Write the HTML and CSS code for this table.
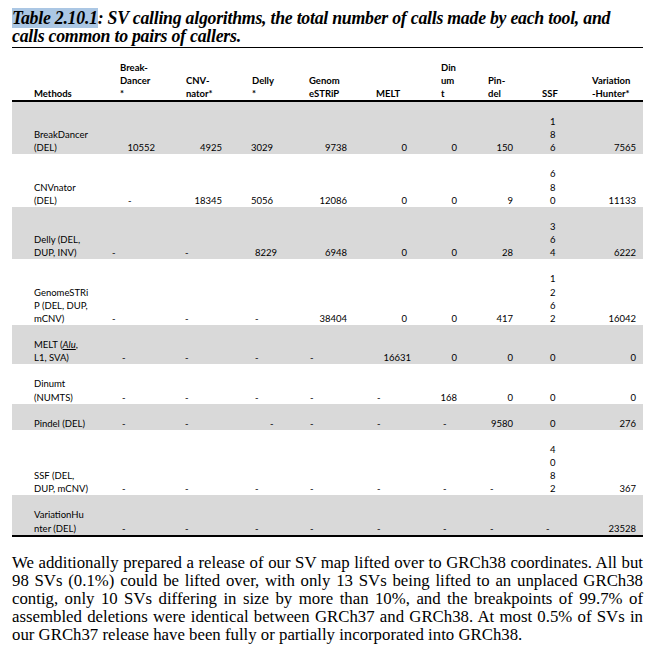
FILE: index.html
```html
<!DOCTYPE html>
<html>
<head>
<meta charset="utf-8">
<link rel="stylesheet" href="styles.css">
</head>
<body>
<div class="page">
  <h1 class="caption"><span class="label">Table 2.10.1</span>: SV calling algorithms, the total number of calls made by each tool, and<br>calls common to pairs of callers.</h1>
  <table class="sv">
    <colgroup>
      <col class="c0"><col class="c1"><col class="c2"><col class="c3"><col class="c4"><col class="c5"><col class="c6"><col class="c7"><col class="c8"><col class="c9">
    </colgroup>
    <thead>
      <tr>
        <th class="m">Methods</th>
        <th>Break-<br>Dancer<br>*</th>
        <th>CNV-<br>nator*</th>
        <th>Delly<br>*</th>
        <th>Genom<br>eSTRiP</th>
        <th>MELT</th>
        <th>Din<br>um<br>t</th>
        <th>Pin-<br>del</th>
        <th>SSF</th>
        <th>Variation<br>-Hunter*</th>
      </tr>
    </thead>
    <tbody>
      <tr class="g">
        <td class="m">BreakDancer<br>(DEL)</td>
        <td class="n">10552</td><td class="n">4925</td><td class="n">3029</td><td class="n">9738</td>
        <td class="n">0</td><td class="n">0</td><td class="n">150</td><td class="s">1<br>8<br>6</td><td class="n">7565</td>
      </tr>
      <tr>
        <td class="m">CNVnator<br>(DEL)</td>
        <td class="d">-</td><td class="n">18345</td><td class="n">5056</td><td class="n">12086</td>
        <td class="n">0</td><td class="n">0</td><td class="n">9</td><td class="s">6<br>8<br>0</td><td class="n">11133</td>
      </tr>
      <tr class="g">
        <td class="m">Delly (DEL,<br>DUP, INV)</td>
        <td class="d lo">-</td><td class="d">-</td><td class="n sh">8229</td><td class="n">6948</td>
        <td class="n">0</td><td class="n">0</td><td class="n">28</td><td class="s">3<br>6<br>4</td><td class="n">6222</td>
      </tr>
      <tr>
        <td class="m">GenomeSTRi<br>P (DEL, DUP,<br>mCNV)</td>
        <td class="d lo">-</td><td class="d">-</td><td class="d">-</td><td class="n">38404</td>
        <td class="n">0</td><td class="n">0</td><td class="n">417</td><td class="s">1<br>2<br>6<br>2</td><td class="n">16042</td>
      </tr>
      <tr class="g">
        <td class="m">MELT (<i class="u">Alu</i>,<br>L1, SVA)</td>
        <td class="d mid">-</td><td class="d">-</td><td class="d">-</td><td class="d">-</td>
        <td class="n wide">16631</td><td class="n">0</td><td class="n">0</td><td class="s">0</td><td class="n">0</td>
      </tr>
      <tr>
        <td class="m">Dinumt<br>(NUMTS)</td>
        <td class="d mid">-</td><td class="d">-</td><td class="d">-</td><td class="d">-</td>
        <td class="d">-</td><td class="n">168</td><td class="n">0</td><td class="s">0</td><td class="n">0</td>
      </tr>
      <tr class="g">
        <td class="m">Pindel (DEL)</td>
        <td class="d mid">-</td><td class="d">-</td><td class="d far">-</td><td class="d">-</td>
        <td class="d">-</td><td class="d">-</td><td class="n">9580</td><td class="s">0</td><td class="n">276</td>
      </tr>
      <tr>
        <td class="m">SSF (DEL,<br>DUP, mCNV)</td>
        <td class="d mid">-</td><td class="d">-</td><td class="d">-</td><td class="d">-</td>
        <td class="d">-</td><td class="d">-</td><td class="d">-</td><td class="s">4<br>0<br>8<br>2</td><td class="n">367</td>
      </tr>
      <tr class="g last">
        <td class="m">VariationHu<br>nter (DEL)</td>
        <td class="d mid">-</td><td class="d">-</td><td class="d">-</td><td class="d">-</td>
        <td class="d">-</td><td class="d">-</td><td class="d">-</td><td class="d">-</td><td class="n">23528</td>
      </tr>
    </tbody>
  </table>
  <p class="body">We additionally prepared a release of our SV map lifted over to GRCh38 coordinates. All but 98 SVs (0.1%) could be lifted over, with only 13 SVs being lifted to an unplaced GRCh38 contig, only 10 SVs differing in size by more than 10%, and the breakpoints of 99.7% of assembled deletions were identical between GRCh37 and GRCh38. At most 0.5% of SVs in our GRCh37 release have been fully or partially incorporated into GRCh38.</p>
</div>
</body>
</html>
```

FILE: styles.css
```css
html, body {
  margin: 0;
  padding: 0;
  background: #ffffff;
}
.page {
  width: 631px;
  padding: 9px 12px 0 12px;
  color: #000;
}
.caption {
  margin: 0;
  font-family: "Liberation Serif", serif;
  font-weight: bold;
  font-style: italic;
  font-size: 17.8px;
  letter-spacing: -0.25px;
  line-height: 18px;
  padding-bottom: 2px;
  border-bottom: 1.5px solid #000;
}
.caption .label {
  background: #abc7e4;
}
.sv {
  width: 631px;
  table-layout: fixed;
  border-collapse: collapse;
  font-family: Lato, "Liberation Sans", sans-serif;
  font-size: 9.5px;
  color: #000;
}
.c0 { width: 104px; }
.c1 { width: 66px; }
.c2 { width: 66px; }
.c3 { width: 57px; }
.c4 { width: 67px; }
.c5 { width: 65px; }
.c6 { width: 47px; }
.c7 { width: 54px; }
.c8 { width: 50px; }
.c9 { width: 55px; }

.sv th {
  font-weight: bold;
  text-align: left;
  vertical-align: bottom;
  line-height: 13px;
  padding: 13px 0 0 4px;
}
.sv thead tr {
  border-bottom: 2px solid #000;
}
.sv th.m { padding-left: 22px; }
.sv td {
  vertical-align: bottom;
  line-height: 13.15px;
  padding: 13px 0 0 0;
  white-space: nowrap;
}
.sv tr.g td { background: #d9d9d9; }
.sv tr.last { border-bottom: 2px solid #000; }
.sv td.m { padding-left: 22px; text-align: left; }
.sv td.n { text-align: right; }
.sv td.d { text-align: left; }
.sv td.s { text-align: left; padding-left: 12px; }

/* per column number right padding */
.sv td.n:nth-child(2) { padding-right: 27px; }
.sv td.n:nth-child(3) { padding-right: 26px; }
.sv td.n:nth-child(4) { padding-right: 32px; }
.sv td.n:nth-child(5) { padding-right: 25px; }
.sv td.n:nth-child(6) { padding-right: 30px; }
.sv td.n:nth-child(7) { padding-right: 27px; }
.sv td.n:nth-child(8) { padding-right: 25px; }
.sv td.n:nth-child(10) { padding-right: 7px; }
.sv td.n.sh { padding-right: 28px; }
.sv td.n.wide { padding-right: 26px; }

/* per column dash left padding */
.sv td.d:nth-child(2) { padding-left: 12px; }
.sv td.d.lo { padding-left: 0; text-indent: -4px; }
.sv td.d.mid { padding-left: 6px; }
.sv td.d:nth-child(3) { padding-left: 3px; }
.sv td.d:nth-child(4) { padding-left: 7px; }
.sv td.d.far { padding-left: 22px; }
.sv td.d:nth-child(5) { padding-left: 5px; }
.sv td.d:nth-child(6) { padding-left: 5px; }
.sv td.d:nth-child(7) { padding-left: 6px; }
.sv td.d:nth-child(8) { padding-left: 6px; }
.sv td.d:nth-child(9) { padding-left: 8px; }

.u {
  text-decoration: underline;
}
.body {
  margin: 17px 0 0 0;
  font-family: "Liberation Serif", serif;
  font-size: 16.8px;
  line-height: 18px;
  text-align: justify;
  color: #000;
}
```
